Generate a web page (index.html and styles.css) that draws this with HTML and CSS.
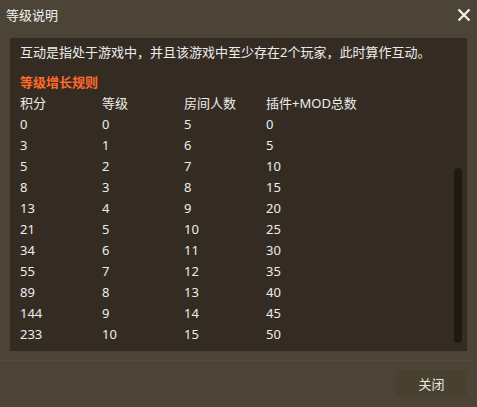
FILE: index.html
```html
<!DOCTYPE html>
<html lang="zh-CN">
<head>
    <meta charset="UTF-8">
    <title>等级说明</title>
    <link rel="stylesheet" href="styles.css">
</head>
<body>
    <div class="dialog">
        <div class="dialog-header">
            <span class="dialog-title">等级说明</span>
            <span class="close-btn">
                <svg width="14" height="14" viewBox="0 0 14 14">
                    <path d="M1.5 1.5 L12.5 12.5 M12.5 1.5 L1.5 12.5" stroke="#f2f2f2" stroke-width="2.2" fill="none"/>
                </svg>
            </span>
        </div>

        <div class="dialog-body">
            <p class="intro">互动是指处于游戏中，并且该游戏中至少存在2个玩家，此时算作互动。</p>
            <h3 class="rule-title">等级增长规则</h3>
            <table class="level-table">
                <thead>
                    <tr><th>积分</th><th>等级</th><th>房间人数</th><th>插件+MOD总数</th></tr>
                </thead>
                <tbody>
                    <tr><td>0</td><td>0</td><td>5</td><td>0</td></tr>
                    <tr><td>3</td><td>1</td><td>6</td><td>5</td></tr>
                    <tr><td>5</td><td>2</td><td>7</td><td>10</td></tr>
                    <tr><td>8</td><td>3</td><td>8</td><td>15</td></tr>
                    <tr><td>13</td><td>4</td><td>9</td><td>20</td></tr>
                    <tr><td>21</td><td>5</td><td>10</td><td>25</td></tr>
                    <tr><td>34</td><td>6</td><td>11</td><td>30</td></tr>
                    <tr><td>55</td><td>7</td><td>12</td><td>35</td></tr>
                    <tr><td>89</td><td>8</td><td>13</td><td>40</td></tr>
                    <tr><td>144</td><td>9</td><td>14</td><td>45</td></tr>
                    <tr><td>233</td><td>10</td><td>15</td><td>50</td></tr>
                </tbody>
            </table>
            <div class="scroll-thumb"></div>
        </div>

        <div class="dialog-footer">
            <button class="btn-close">关闭</button>
        </div>
    </div>
</body>
</html>
```

FILE: styles.css
```css
body {
    margin: 0;
    background-color: #4b4437;
    font-family: "Noto Sans", "Noto Sans CJK SC", sans-serif;
    font-size: 13px;
    color: #ececec;
}

.dialog {
    width: 477px;
    height: 407px;
    display: flex;
    flex-direction: column;
}

.dialog-header {
    height: 38px;
    display: flex;
    align-items: flex-start;
    justify-content: space-between;
    padding: 0 6px;
    box-sizing: border-box;
}

.dialog-title {
    margin-top: 5px;
    line-height: 20px;
    color: #f2f2f2;
}

.close-btn {
    margin-top: 8px;
    display: flex;
}

.dialog-body {
    position: relative;
    margin: 0 10px;
    height: 313px;
    box-sizing: border-box;
    padding: 4px 10px 0;
    background-color: #342c22;
}

.intro {
    margin: 0;
    line-height: 21px;
}

.rule-title {
    margin: 9px 0 0;
    font-size: 13px;
    font-weight: bold;
    line-height: 21px;
    color: #ff6a2a;
}

.level-table {
    border-collapse: collapse;
}

.level-table th,
.level-table td {
    width: 82px;
    padding: 0;
    text-align: left;
    font-weight: normal;
    line-height: 21px;
    white-space: nowrap;
}

/* overlay scrollbar thumb */
.scroll-thumb {
    position: absolute;
    right: 5px;
    top: 130px;
    width: 8px;
    height: 175px;
    border-radius: 4px;
    background-color: #1d1a14;
}

.dialog-footer {
    flex: 1;
    margin-top: 9px;
    border-top: 1px solid #524a3c;
    display: flex;
    justify-content: flex-end;
    align-items: flex-start;
    padding: 9px 10px 0;
}

.btn-close {
    width: 71px;
    height: 26px;
    border: none;
    background-color: #48412f;
    color: #e6e6e6;
    font-family: inherit;
    font-size: 13px;
    cursor: pointer;
}
```
